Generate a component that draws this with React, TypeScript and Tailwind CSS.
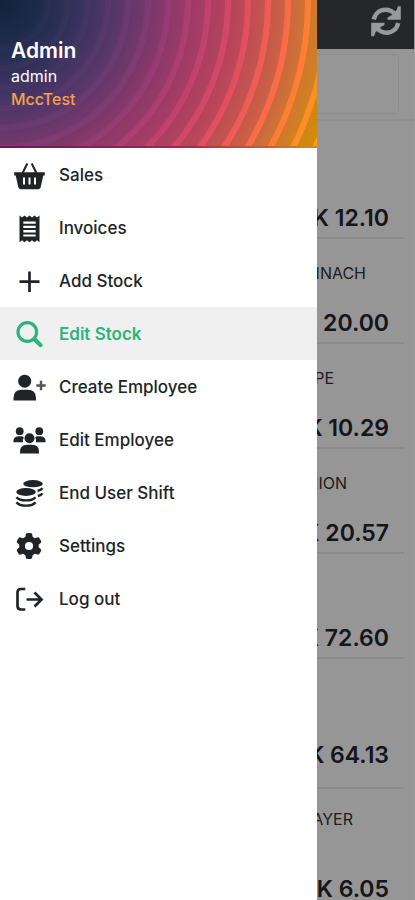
import type { ReactNode } from 'react'
import { FaGear } from 'react-icons/fa6'

type MenuItem = { label: string; icon: ReactNode; active?: boolean }

type StockRow = { name?: string; namePad?: string; price: string; box?: string }

function Icon({ children }: { children: ReactNode }) {
  return (
    <svg viewBox="0 0 34 32" width="34" height="32" fill="currentColor" aria-hidden="true">
      {children}
    </svg>
  )
}

const menu: MenuItem[] = [
  {
    label: 'Sales',
    icon: (
      <Icon>
        <path d="M14.3 4.5 9.600 14M18.700 4.500 23.400 14" stroke="currentColor" strokeWidth="2" fill="none" />
        <path
          fillRule="evenodd"
          d="M1.200 13.300h30.600v3.200h-1.500l-2.700 12q-.500 1.800-2.300 1.800H7.700q-1.800 0-2.300-1.800l-2.700-12H1.200zM10 18.500v7h2v-7zM15.500 18.500v7h2v-7zM21 18.500v7h2v-7z"
        />
      </Icon>
    ),
  },
  {
    label: 'Invoices',
    icon: (
      <Icon>
        <path
          fillRule="evenodd"
          d="M6.500 3.500 9 5.500 11.500 3.500 14 5.500 16.500 3.500 19 5.500 21.500 3.500 24 5.500 26.500 3.500V30.200L24 28.200 21.500 30.200 19 28.200 16.500 30.200 14 28.200 11.500 30.200 9 28.200 6.500 30.200zM10.300 9.500v2.300h12.400V9.500zM10.300 13.800v2.300h12.400v-2.300zM10.300 18.100v2.300h12.400v-2.300zM10.300 22.400v2h12.400v-2z"
        />
      </Icon>
    ),
  },
  {
    label: 'Add Stock',
    icon: (
      <Icon>
        <path d="M16.500 6.500v20.500M6.500 16.700h20" stroke="currentColor" strokeWidth="2.700" fill="none" />
      </Icon>
    ),
  },
  {
    label: 'Edit Stock',
    active: true,
    icon: (
      <Icon>
        <circle cx="14.300" cy="14" r="9.300" fill="none" stroke="currentColor" strokeWidth="3.200" />
        <path d="m21.500 21.200 6.200 6" stroke="currentColor" strokeWidth="4" strokeLinecap="round" />
      </Icon>
    ),
  },
  {
    label: 'Create Employee',
    icon: (
      <Icon>
        <circle cx="11.700" cy="10.200" r="6.500" />
        <path d="M.500 29.500V27q0-8.200 8.500-8.200h5.500q8.500 0 8.500 8.200v2.500z" />
        <path d="M28 9.800v9.400M23.300 14.500h9.400" stroke="#555" strokeWidth="2.400" />
      </Icon>
    ),
  },
  {
    label: 'Edit Employee',
    icon: (
      <Icon>
        <circle cx="6.700" cy="7.200" r="3.900" />
        <circle cx="26.300" cy="7.200" r="3.900" />
        <path d="M.300 18.200q0-6 5-6h3q1.500 0 2.500 1-1.300 2.500-.600 5zM32.700 18.200q0-6-5-6h-3q-1.500 0-2.500 1 1.300 2.500.600 5z" />
        <circle cx="16.500" cy="14.300" r="5" />
        <path d="M7 29.500V28q0-7.200 7-7.200h5q7 0 7 7.200v1.500z" />
      </Icon>
    ),
  },
  {
    label: 'End User Shift',
    icon: (
      <Icon>
        <ellipse cx="20" cy="6.700" rx="9.800" ry="3.600" />
        <ellipse cx="13" cy="15" rx="9.800" ry="3.900" />
        <path
          d="M3.500 20.200q2.500 3.200 9.500 3.200t9.500-3.200M3.500 25.200q2.500 3.400 9.500 3.400t9.500-3.400M24.500 13.900q3.800-.900 5-2.700M24.800 19q3.500-.900 4.700-2.700"
          fill="none"
          stroke="currentColor"
          strokeWidth="2.400"
        />
      </Icon>
    ),
  },
  { label: 'Settings', icon: <FaGear size={26} className="ml-[3px]" aria-hidden="true" /> },
  {
    label: 'Log out',
    icon: (
      <Icon>
        <path
          d="M12.300 6H8Q4.500 6 4.500 9.500v13.500Q4.500 26.500 8 26.500h4.300M13.500 16.500h14.500M21.500 9.500l7 7-7 7"
          fill="none"
          stroke="currentColor"
          strokeWidth="2.700"
        />
      </Icon>
    ),
  },
]

const stock: StockRow[] = [
  { price: '12.10' },
  { name: 'SPINACH', namePad: 'pr-[38px]', price: '20.00' },
  { name: 'GRAPE', namePad: 'pr-[70px]', price: '10.29' },
  { name: 'ONION', namePad: 'pr-[57px]', price: '20.57' },
  { price: '72.60' },
  { price: '64.13', box: 'h-[130px] pt-[22px] pb-[18px]' },
  { name: 'LAYER', namePad: 'pr-[51px]', price: '6.05', box: 'h-[130px] pt-[18px] pb-[14px]' },
]

// radii of the light rings in the drawer header
const rings = Array.from({ length: 16 }, (_, i) => 48 + i * 20)

function HeaderArt() {
  return (
    <svg
      className="absolute inset-0 h-full w-full"
      viewBox="0 0 317 148"
      preserveAspectRatio="xMinYMin slice"
      aria-hidden="true"
    >
      <defs>
        <radialGradient id="base" gradientUnits="userSpaceOnUse" cx="0" cy="0" r="350">
          <stop offset="0" stopColor="#12233c" />
          <stop offset="0.100" stopColor="#1b2a48" />
          <stop offset="0.200" stopColor="#30305a" />
          <stop offset="0.320" stopColor="#503769" />
          <stop offset="0.450" stopColor="#81386a" />
          <stop offset="0.570" stopColor="#a33c65" />
          <stop offset="0.680" stopColor="#b9465a" />
          <stop offset="0.790" stopColor="#c85c48" />
          <stop offset="0.890" stopColor="#d0792e" />
          <stop offset="1" stopColor="#d19000" />
        </radialGradient>
        <radialGradient id="ring" gradientUnits="userSpaceOnUse" cx="0" cy="0" r="350">
          <stop offset="0.100" stopColor="#1f2c4c" />
          <stop offset="0.250" stopColor="#433562" />
          <stop offset="0.370" stopColor="#6b3a72" />
          <stop offset="0.480" stopColor="#963b74" />
          <stop offset="0.600" stopColor="#c4426e" />
          <stop offset="0.700" stopColor="#e04d60" />
          <stop offset="0.800" stopColor="#f86450" />
          <stop offset="0.890" stopColor="#ff8130" />
          <stop offset="1" stopColor="#ffa01c" />
        </radialGradient>
        <linearGradient id="edge">
          <stop offset="0" stopColor="#6c145f" />
          <stop offset="0.600" stopColor="#b91f55" />
          <stop offset="1" stopColor="#d98a10" />
        </linearGradient>
      </defs>
      <rect width="317" height="148" fill="url(#base)" />
      {rings.map((r) => (
        <circle key={r} r={r} fill="none" stroke="url(#ring)" strokeWidth="6" />
      ))}
      <rect y="146" width="317" height="2" fill="url(#edge)" />
    </svg>
  )
}

function StockPage() {
  return (
    <main className="min-h-screen border-r border-white bg-[#fbfbfb]">
      <header className="flex h-[49px] items-center justify-end bg-[#3e4149] pr-3">
        <button type="button" aria-label="Refresh" className="-mt-2 text-white">
          <svg viewBox="0 0 32 32" width="32" height="32" fill="currentColor" aria-hidden="true">
            <path
              d="M3.800 14.500C5 8.500 9.500 4.800 15.500 4.800q6 0 10 5M28.200 18c-1.200 6-5.700 9.700-11.700 9.700q-6 0-10-5"
              fill="none"
              stroke="currentColor"
              strokeWidth="4.400"
            />
            <path d="M30.800 1.300V14.700H17.500v-2.300l4-2.200 5-5 1.500-3.900zM1.200 31.200V17.800H14.500v2.300l-4 2.200-5 5-1.500 3.900z" />
          </svg>
        </button>
      </header>
      <div className="border-b-2 border-[#f1f1f1] py-[5px] pl-4 pr-[15px]">
        <input
          type="search"
          aria-label="Search stock"
          className="block h-[60px] w-full rounded border border-[#eaeaea] bg-transparent px-4"
        />
      </div>
      <ul className="mt-[13px] pl-4 pr-[10px]">
        {stock.map((row) => (
          <li
            key={row.price}
            className={`flex flex-col border-b-2 border-[#e6e6e6] text-right ${
              row.box ?? 'h-[105px] pt-[22px] pb-[5px]'
            }`}
          >
            {row.name && <p className={`text-base leading-6 text-[#333] ${row.namePad}`}>{row.name}</p>}
            <p className="mt-auto pr-[15px] text-[23px] font-semibold leading-7 text-[#24262b]">K {row.price}</p>
          </li>
        ))}
      </ul>
    </main>
  )
}

export default function App() {
  return (
    <div className="relative h-screen overflow-hidden font-['Inter',sans-serif]">
      <StockPage />
      <div className="absolute inset-0 bg-black/40" />

      <aside className="absolute inset-y-0 left-0 w-[317px] bg-white">
        <div className="relative h-[148px] overflow-hidden">
          <HeaderArt />
          <div className="relative px-[11px] pt-[38px] text-white">
            <h1 className="text-[21px] font-semibold leading-[26px]">Admin</h1>
            <p className="text-base leading-6">admin</p>
            <p className="text-base font-medium leading-[22px] text-[#f3a24c]">MccTest</p>
          </div>
        </div>
        <nav>
          {menu.map((item) => (
            <a
              key={item.label}
              href="#"
              className={`flex h-[53px] items-center gap-3 pl-[13px] text-[17px] ${
                item.active ? 'bg-[#f0f0f0] font-semibold text-[#2bb57c]' : 'font-medium text-[#212427]'
              }`}
            >
              <span className="flex w-[34px] shrink-0 items-center">{item.icon}</span>
              <span className="pt-0.5">{item.label}</span>
            </a>
          ))}
        </nav>
      </aside>
    </div>
  )
}
